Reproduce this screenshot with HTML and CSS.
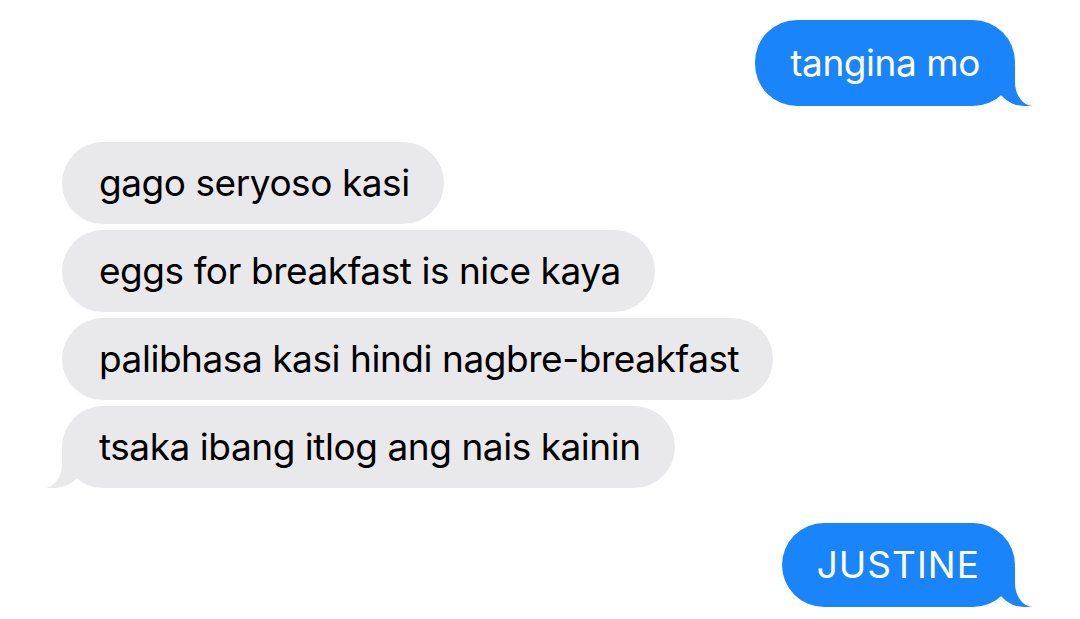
FILE: index.html
```html
<!DOCTYPE html>
<html lang="tl">
<head>
    <meta charset="UTF-8">
    <meta name="viewport" content="width=device-width, initial-scale=1.0">
    <title>Messages</title>
    <link rel="stylesheet" href="styles.css">
</head>
<body>
    <div class="chat">
        <div class="msg sent tail">tangina mo</div>

        <div class="group">
            <div class="msg received">gago seryoso kasi</div>
            <div class="msg received">eggs for breakfast is nice kaya</div>
            <div class="msg received">palibhasa kasi hindi nagbre-breakfast</div>
            <div class="msg received tail">tsaka ibang itlog ang nais kainin</div>
        </div>

        <div class="msg sent tail last">JUSTINE</div>
    </div>
</body>
</html>
```

FILE: styles.css
```css
body {
    margin: 0;
    background-color: #fff;
    font-family: Inter, 'Helvetica Neue', Arial, sans-serif;
}
.chat {
    display: flex;
    flex-direction: column;
    padding: 20px 65px 0 62px;
}
.msg {
    position: relative;
    font-size: 37px;
    line-height: 44px;
    padding: 19px 34px 19px 37px;
    border-radius: 42px;
    letter-spacing: -0.45px;
}
.sent {
    align-self: flex-end;
    background-color: #1a84fb;
    color: #fff;
    padding: 21px 35px 21px 35px;
}
.received {
    align-self: flex-start;
    background-color: #e9e9eb;
    color: #000;
}
.group {
    display: flex;
    flex-direction: column;
    gap: 6px;
    margin-top: 36px;
}
.last {
    margin-top: 35px;
    padding-top: 20px;
    padding-bottom: 20px;
    letter-spacing: 1px;
}

/* bubble tail */
.tail::before,
.tail::after {
    content: "";
    position: absolute;
    bottom: 0;
    height: 40px;
}
.sent.tail::before {
    right: -17px;
    width: 40px;
    background-color: #1a84fb;
    border-bottom-left-radius: 32px 36px;
}
.sent.tail::after {
    right: -26px;
    width: 26px;
    background-color: #fff;
    border-bottom-left-radius: 18px 24px;
}
.received.tail::before {
    left: -15px;
    width: 40px;
    background-color: #e9e9eb;
    border-bottom-right-radius: 32px 36px;
}
.received.tail::after {
    left: -26px;
    width: 26px;
    background-color: #fff;
    border-bottom-right-radius: 18px 24px;
}
```
